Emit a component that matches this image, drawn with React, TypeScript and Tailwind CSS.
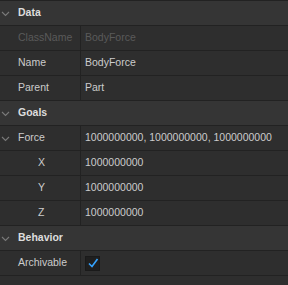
import React from 'react';

type Row =
    | { kind: 'header'; label: string }
    | { kind: 'prop'; label: string; value?: string; dim?: boolean; chevron?: boolean; indent?: boolean; check?: boolean };

const rows: Row[] = [
    { kind: 'header', label: 'Data' },
    { kind: 'prop', label: 'ClassName', value: 'BodyForce', dim: true },
    { kind: 'prop', label: 'Name', value: 'BodyForce' },
    { kind: 'prop', label: 'Parent', value: 'Part' },
    { kind: 'header', label: 'Goals' },
    { kind: 'prop', label: 'Force', value: '1000000000, 1000000000, 1000000000', chevron: true },
    { kind: 'prop', label: 'X', value: '1000000000', indent: true },
    { kind: 'prop', label: 'Y', value: '1000000000', indent: true },
    { kind: 'prop', label: 'Z', value: '1000000000', indent: true },
    { kind: 'header', label: 'Behavior' },
    { kind: 'prop', label: 'Archivable', check: true },
];

const Chevron = () => (
    <svg className="w-[9px] h-[9px] shrink-0" viewBox="0 0 9 9" fill="none" stroke="#7a7a7a" strokeWidth={1.1}>
        <polyline points="1,3 4.5,6.5 8,3" />
    </svg>
);

export default function App() {
    return (
        <div className="w-[288px] h-[285px] overflow-hidden bg-[#2e2e2e] text-[10.5px] text-[#cccccc]" style={{ fontFamily: '"Liberation Sans", Arial, sans-serif' }}>
            {rows.map((row, i) =>
                row.kind === 'header' ? (
                    <div key={i} className="h-[25px] border-t border-[#222222] bg-[#353535] flex items-center pl-[1px]">
                        <Chevron />
                        <span className="ml-[8px] font-bold text-[#dddddd]">{row.label}</span>
                    </div>
                ) : (
                    <div key={i} className="h-[25px] border-t border-[#222222] flex">
                        <div className={`w-[81px] shrink-0 border-r border-[#222222] flex items-center ${row.indent ? 'pl-[38px]' : 'pl-[1px]'}`}>
                            {row.chevron ? <Chevron /> : !row.indent && <span className="w-[9px] shrink-0" />}
                            <span className={`${row.indent ? '' : 'ml-[8px]'} ${row.dim ? 'text-[#5a5a5a]' : ''}`}>{row.label}</span>
                        </div>
                        <div className={`flex items-center pl-[4px] ${row.dim ? 'text-[#5a5a5a]' : ''}`}>
                            {row.check ? (
                                <div className="w-[15px] h-[15px] bg-[#1f1f1f] border border-[#1a1a1a] flex items-center justify-center">
                                    <svg className="w-[12px] h-[12px]" viewBox="0 0 12 12" fill="none" stroke="#35a3ff" strokeWidth={1.6}>
                                        <polyline points="2,6.5 5,9.5 10.5,2" />
                                    </svg>
                                </div>
                            ) : (
                                <span>{row.value}</span>
                            )}
                        </div>
                    </div>
                )
            )}
            <div className="h-[10px] border-t border-[#222222]" />
        </div>
    );
}
